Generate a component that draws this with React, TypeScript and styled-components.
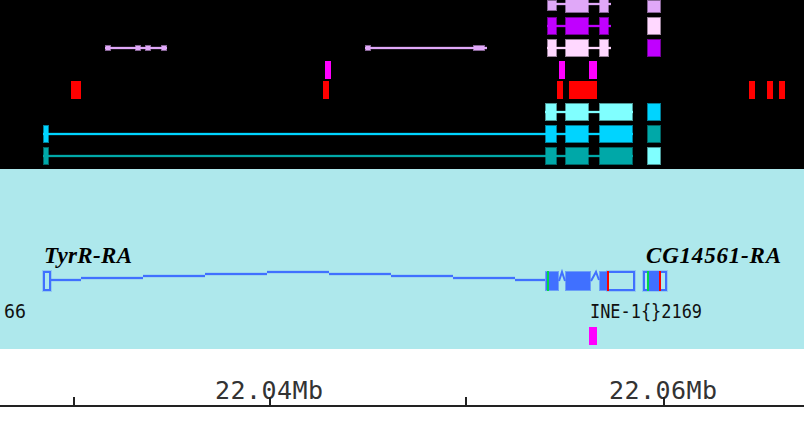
import { FC } from "react";
import styled, { createGlobalStyle } from "styled-components";

const GlobalStyle = createGlobalStyle`
  html, body {
    margin: 0;
    padding: 0;
    background: #fff;
  }
`;

const PINK = "#e0a8f8";
const PURPLE = "#c000ff";
const PALE = "#ffd8ff";
const AQUA = "#80ffff";
const SKY = "#00d4ff";
const TEAL = "#00a8a8";
const RED = "#ff0000";
const MAGENTA = "#ff00ff";
const BLUE = "#4070ff";
const GREEN = "#00d848";

type Span = [number, number];

interface Transcript {
  top: number;
  height?: number;
  color: string;
  spans: Span[];
  start?: number;
  tail?: number;
}

interface Block {
  x: number;
  w: number;
  top: number;
  h: number;
  color: string;
}

const transcripts: Transcript[] = [
  { top: 45, height: 6, color: PINK, spans: [[105, 111], [135, 141], [145, 151], [161, 167]] },
  { top: 45, height: 6, color: PINK, spans: [[365, 371], [473, 485]], tail: 487 },
  { top: -5, color: PINK, spans: [[565, 589], [599, 609]], start: 555, tail: 611 },
  { top: 17, color: PURPLE, spans: [[547, 557], [565, 589], [599, 609]], tail: 611 },
  { top: 39, color: PALE, spans: [[547, 557], [565, 589], [599, 609]], tail: 611 },
  { top: 103, color: AQUA, spans: [[545, 557], [565, 589], [599, 633]] },
  { top: 125, color: SKY, spans: [[43, 49], [545, 557], [565, 589], [599, 633]] },
  { top: 147, color: TEAL, spans: [[43, 49], [545, 557], [565, 589], [599, 633]] },
];

const softBlocks: Block[] = [
  { x: 547, w: 10, top: 0, h: 11, color: PINK },
  { x: 647, w: 14, top: 0, h: 13, color: PINK },
  { x: 647, w: 14, top: 17, h: 18, color: PALE },
  { x: 647, w: 14, top: 39, h: 18, color: PURPLE },
  { x: 647, w: 14, top: 103, h: 18, color: SKY },
  { x: 647, w: 14, top: 125, h: 18, color: TEAL },
  { x: 647, w: 14, top: 147, h: 18, color: AQUA },
];

const hardBlocks: Block[] = [
  { x: 325, w: 6, top: 61, h: 18, color: MAGENTA },
  { x: 559, w: 6, top: 61, h: 18, color: MAGENTA },
  { x: 589, w: 8, top: 61, h: 18, color: MAGENTA },
  { x: 71, w: 10, top: 81, h: 18, color: RED },
  { x: 323, w: 6, top: 81, h: 18, color: RED },
  { x: 557, w: 6, top: 81, h: 18, color: RED },
  { x: 569, w: 28, top: 81, h: 18, color: RED },
  { x: 749, w: 6, top: 81, h: 18, color: RED },
  { x: 767, w: 6, top: 81, h: 18, color: RED },
  { x: 779, w: 6, top: 81, h: 18, color: RED },
];

const intronSteps: [number, number, number][] = [
  [51, 81, 279],
  [81, 143, 277],
  [143, 205, 275],
  [205, 267, 273],
  [267, 329, 271],
  [329, 391, 273],
  [391, 453, 275],
  [453, 515, 277],
  [515, 545, 279],
];

const ticks = [74, 270, 466, 664];

const Page = styled.div`
  width: 804px;
  height: 440px;
  overflow: hidden;
  display: flex;
  flex-direction: column;
`;

const Panel = styled.section<{ $bg: string; $height: number }>`
  height: ${({ $height }) => $height}px;
  flex: none;
  background: ${({ $bg }) => $bg};

  svg {
    display: block;
  }
`;

const GeneName = styled.text`
  font-family: "Liberation Serif", serif;
  font-size: 23px;
  font-weight: 700;
  font-style: italic;
  fill: #000;
`;

const RepeatName = styled.text`
  font-family: "DejaVu Sans Mono", monospace;
  font-size: 20px;
  fill: #111;
`;

const ScaleLabel = styled.text`
  font-family: "DejaVu Sans Mono", monospace;
  font-size: 25px;
  fill: #333;
`;

const Rect: FC<{ x: number; y: number; w: number; h: number; fill: string }> = ({ x, y, w, h, fill }) => (
  <rect x={x} y={y} width={w} height={h} fill={fill} />
);

const SoftBox: FC<{ x: number; y: number; w: number; h: number; fill: string }> = ({ x, y, w, h, fill }) => (
  <g>
    <rect x={x} y={y} width={w} height={h} fill={fill} opacity={0.6} />
    <rect x={x + 1} y={y + 1} width={w - 2} height={h - 2} fill={fill} />
  </g>
);

const SoftLine: FC<{ x: number; y: number; w: number; fill: string }> = ({ x, y, w, fill }) => (
  <g>
    <rect x={x} y={y - 1} width={w} height={4} fill={fill} opacity={0.15} />
    <rect x={x} y={y} width={w} height={2} fill={fill} />
  </g>
);

const TranscriptGlyph: FC<Transcript> = ({ top, height = 18, color, spans, start, tail }) => {
  const mid = top + height / 2 - 1;
  const first = start ?? spans[0][0];
  const last = tail ?? spans[spans.length - 1][1];
  return (
    <g>
      <SoftLine x={first} y={mid} w={last - first} fill={color} />
      {spans.map(([a, b]) => (
        <SoftBox key={a} x={a} y={top} w={b - a} h={height} fill={color} />
      ))}
    </g>
  );
};

const HollowExon: FC<{ x: number; w: number }> = ({ x, w }) => (
  <g>
    <rect x={x + 1} y={272} width={w - 2} height={18} fill="none" stroke={BLUE} strokeWidth={2} />
    <rect x={x - 0.5} y={270.5} width={w + 1} height={21} fill="none" stroke={BLUE} strokeOpacity={0.25} />
  </g>
);

const Caret: FC<{ points: string }> = ({ points }) => (
  <polyline points={points} fill="none" stroke={BLUE} strokeWidth={2} />
);

const App: FC = () => {
  return (
    <Page>
      <GlobalStyle />
      <Panel $bg="#000" $height={169}>
        <svg width={804} height={169}>
          {transcripts.map((t) => (
            <TranscriptGlyph key={`${t.top}-${t.spans[0][0]}`} {...t} />
          ))}
          {softBlocks.map((b) => (
            <SoftBox key={`${b.x}-${b.top}`} x={b.x} y={b.top} w={b.w} h={b.h} fill={b.color} />
          ))}
          {hardBlocks.map((b) => (
            <Rect key={`${b.x}-${b.top}`} x={b.x} y={b.top} w={b.w} h={b.h} fill={b.color} />
          ))}
        </svg>
      </Panel>
      <Panel $bg="#aee8ec" $height={180}>
        <svg width={804} height={180} viewBox="0 169 804 180">
          <GeneName x={44} y={263} textLength={88}>TyrR-RA</GeneName>
          <GeneName x={646} y={263} textLength={135}>CG14561-RA</GeneName>

          <HollowExon x={43} w={8} />
          {intronSteps.map(([a, b, y]) => (
            <SoftLine key={a} x={a} y={y} w={b - a} fill={BLUE} />
          ))}

          <SoftBox x={545} y={271} w={14} h={20} fill={BLUE} />
          <Rect x={547} y={271} w={2} h={20} fill={GREEN} />
          <Caret points="559,281 562,272 565,281" />
          <SoftBox x={565} y={271} w={26} h={20} fill={BLUE} />
          <Caret points="591,281 596,272 599,280" />
          <SoftBox x={599} y={271} w={9} h={20} fill={BLUE} />
          <HollowExon x={607} w={28} />
          <Rect x={607} y={271} w={2} h={20} fill={RED} />

          <HollowExon x={643} w={24} />
          <Rect x={649} y={271} w={10} h={20} fill={BLUE} />
          <Rect x={647} y={271} w={2} h={20} fill={GREEN} />
          <Rect x={659} y={271} w={2} h={20} fill={RED} />

          <RepeatName x={4} y={318} textLength={22} lengthAdjust="spacingAndGlyphs">66</RepeatName>
          <RepeatName x={590} y={318} textLength={112} lengthAdjust="spacingAndGlyphs">{"INE-1{}2169"}</RepeatName>
          <Rect x={589} y={327} w={8} h={18} fill={MAGENTA} />
        </svg>
      </Panel>
      <Panel $bg="#fff" $height={91}>
        <svg width={804} height={91} viewBox="0 349 804 91">
          <ScaleLabel x={215} y={399} textLength={108}>22.04Mb</ScaleLabel>
          <ScaleLabel x={609} y={399} textLength={108}>22.06Mb</ScaleLabel>
          <Rect x={0} y={405} w={804} h={2} fill="#222" />
          {ticks.map((x) => (
            <Rect key={x} x={x - 1} y={397} w={2} h={8} fill="#222" />
          ))}
        </svg>
      </Panel>
    </Page>
  );
};

export default App;
